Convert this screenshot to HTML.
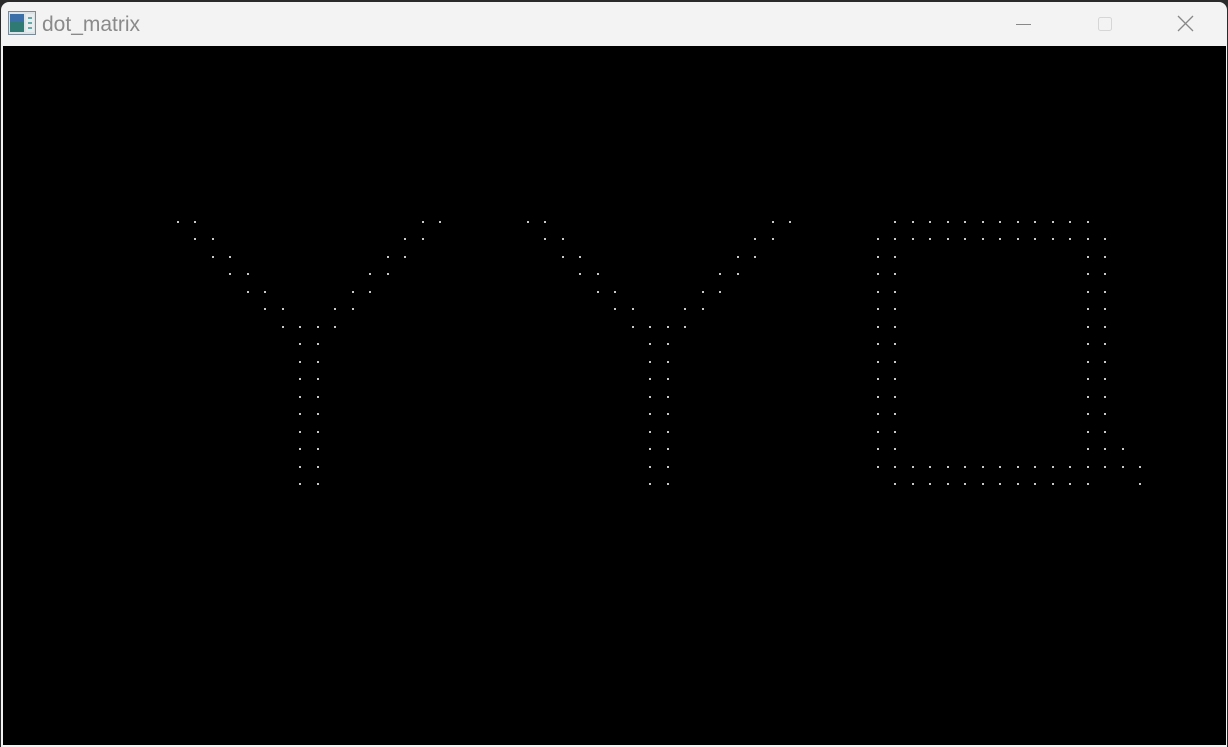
<!DOCTYPE html>
<html><head><meta charset="utf-8"><style>
html,body{margin:0;padding:0;width:1228px;height:747px;overflow:hidden;background:#2a2a2a;font-family:"Liberation Sans",sans-serif}
#win{position:absolute;left:1px;top:2px;width:1226px;height:745px;background:#f3f3f3;border-radius:8px 8px 0 0;overflow:hidden}
#title{position:absolute;left:41px;top:11px;font-size:21px;color:#8a8a8a}
#canvas{position:absolute;left:2px;top:44px;right:1px;bottom:2px;background:#000}
.d{position:absolute;width:2px;height:2px;background:#c8c8c8}
</style></head><body>
<div id="win">
<svg style="position:absolute;left:7px;top:9px" width="28" height="24" viewBox="0 0 28 24">
<rect x="0.5" y="0.5" width="27" height="23" fill="#dde4e8" stroke="#7a8a96"/>
<rect x="2" y="3" width="14" height="18" fill="#2f7a72"/>
<rect x="2" y="3" width="14" height="8" fill="#3b6fa8"/>
<rect x="18" y="3" width="8" height="18" fill="#e8eef0"/>
<rect x="20" y="6" width="4" height="2" fill="#6aa"/><rect x="20" y="11" width="4" height="2" fill="#6aa"/><rect x="20" y="16" width="4" height="2" fill="#6aa"/>
</svg>
<div id="title">dot_matrix</div>
<svg style="position:absolute;left:1015px;top:14px" width="16" height="16"><line x1="0" y1="8.5" x2="15" y2="8.5" stroke="#888" stroke-width="1"/></svg>
<svg style="position:absolute;left:1096px;top:14px" width="16" height="16"><rect x="1.5" y="1.5" width="13" height="13" rx="2" fill="none" stroke="#d6d6d6"/></svg>
<svg style="position:absolute;left:1176px;top:13px" width="18" height="18"><path d="M1 1L16 16M16 1L1 16" stroke="#888" stroke-width="1.3"/></svg>
<div id="canvas"></div>
</div>
<script>
var c=document.getElementById('canvas');
var ox=177.7-3,oy=221.7-46,p=17.5;
function dot(col,row){var e=document.createElement('div');e.className='d';e.style.left=(ox+col*p-1).toFixed(1)+'px';e.style.top=(oy+row*p-1).toFixed(1)+'px';c.appendChild(e);}
function Y(o){for(var r=0;r<7;r++){dot(o+r,r);dot(o+r+1,r);if(r<6){dot(o+15-r,r);dot(o+14-r,r);}else{dot(o+9,r);dot(o+8,r);}}
for(var r=7;r<16;r++){dot(o+7,r);dot(o+8,r);}}
Y(0);Y(20);
var i;
for(i=41;i<=52;i++)dot(i,0);
for(i=40;i<=53;i++)dot(i,1);
for(var r=2;r<=13;r++){dot(40,r);dot(41,r);dot(52,r);dot(53,r);}
dot(54,13);
for(i=40;i<=55;i++)dot(i,14);
for(i=41;i<=52;i++)dot(i,15);dot(55,15);
</script>
</body></html>
